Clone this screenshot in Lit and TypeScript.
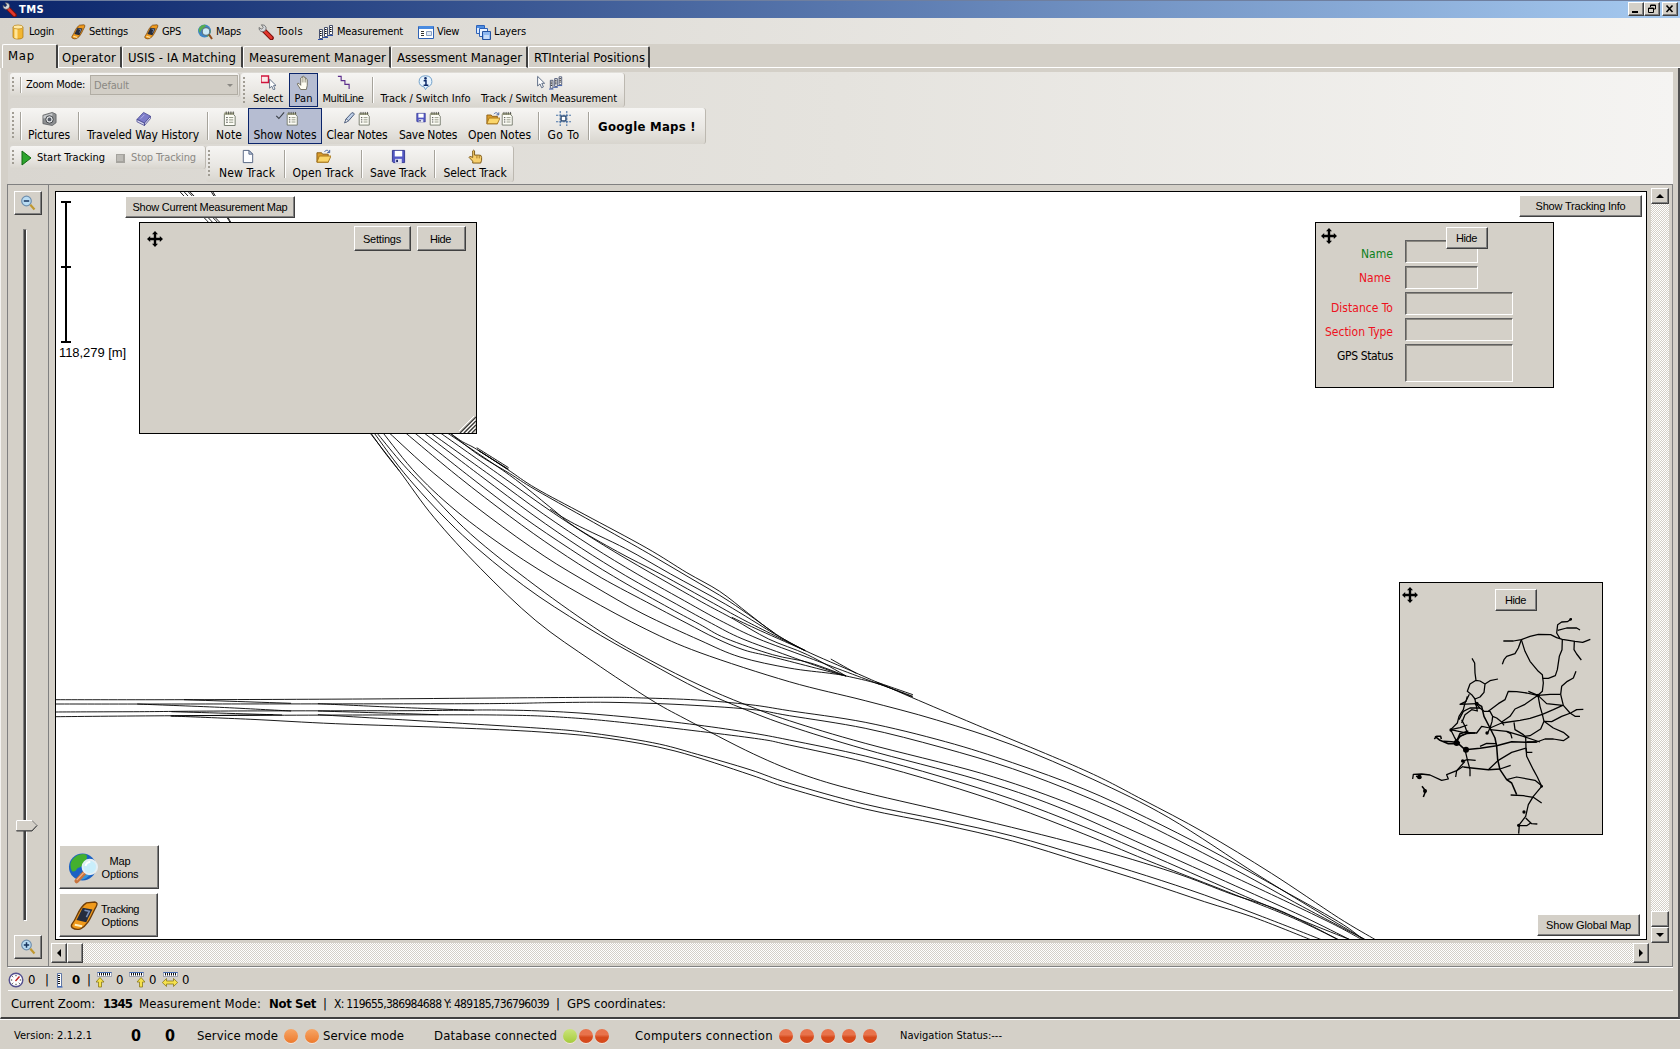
import { LitElement, html, svg, css, type TemplateResult } from "lit";
import { customElement } from "lit/decorators.js";

type Pt = [number, number];

/* ---------- icons ---------- */

const noteShape = svg`<path d="M2.500 3h9l2.500 2.500V15.500H2.500z" fill="#fdfdf6" stroke="#6f7566"/><path d="M2.500 1.500h10.500v2.500H2.500z" fill="#a5a888"/><path d="M4.500 .5v3M7 .5v3M9.500 .5v3M12 .5v3" stroke="#444" stroke-width=".9"/><path d="M4.500 7h1.600M4.500 9.500h1.600M4.500 12h1.600" stroke="#333"/><path d="M7.500 7H12M7.500 9.500H12M7.500 12H12" stroke="#8a8f7c"/>`;
const rulerShape = svg`<path d="M1.500 5.500h3v9h-3zM6.500 3.500h3v9h-3zM11.500 1.500h3v9h-3z" fill="#fff" stroke="#46506e"/><path d="M2 7.500h1.600M2 9.500h1.600M2 11.500h1.600M7 5.500h1.600M7 7.500h1.600M7 9.500h1.600M12 3.500h1.600M12 5.500h1.600M12 7.500h1.600" stroke="#111"/><path d="M0 15.500h5M5 13.500h5M10 11.500h5" stroke="#2b4fa8"/>`;
const cursorShape = svg`<path d="M3 1v11l2.700-2.400L7.600 14l2-.9-1.800-4.200H11z" fill="#fff" stroke="#4b5d78"/>`;
const floppyShape = svg`<path d="M1.500 1.500h13v13h-12l-1-1z" fill="#5358c4" stroke="#34378f"/><path d="M4 2h8v6H4z" fill="#fff"/><path d="M4.500 10.500h7V15h-7z" fill="#e3e4f2"/><path d="M5.500 11.500h2V14h-2z" fill="#222a66"/>`;
const folderShape = svg`<path d="M1 4h5l1 1.500h6V14H1z" fill="#d99b2b" stroke="#8a5c12"/><path d="M1 14l2.500-6.500H16L13 14z" fill="#fbd66a" stroke="#a8761c"/><path d="M9 3c2-2.400 4-2 5 .4M14.600 1v2.800H12" fill="none" stroke="#3b5a9c"/>`;
const gpsShape = svg`<path d="M9.500 1.200L14 .8q1.600.4.6 2.200C12.200 7 11 12.400 6.500 14.600q-2.400.8-4.400-.6-.8-1 .2-2.200C5 8.500 5.200 3.800 9.500 1.200z" fill="#f09a1c" stroke="#6f3d08" stroke-width=".7"/><path d="M7.600 3.800l5 .8-3.200 6.600-5-1.200z" fill="#252c3e"/><path d="M8.500 5l2.500.6-1.500 3" stroke="#7b90b8" fill="none" stroke-width=".8"/><path d="M3.500 12.500l3.800.8" stroke="#fff2c2"/>`;
const wrenchShape = svg`<path d="M6 6.500L13.500 14" stroke="#7d0f0c" stroke-width="4.600" stroke-linecap="round"/><path d="M7 7.500l6.200 6.200" stroke="#e2372c" stroke-width="2.800" stroke-linecap="round"/><path d="M1 3.500L3.600 5.200 5.200 3.400 3.400.8Q7 .4 8 3.200q.5 2-1 3.700-2 1.400-4 .6Q.8 6.400 1 3.500z" fill="#d5d8dc" stroke="#555" stroke-width=".7"/>`;

const ICONS: Record<string, TemplateResult> = {
  wrench: wrenchShape,
  cylinder: svg`<path d="M3 3v10c0 2.700 10 2.700 10 0V3z" fill="#f2b632" stroke="#a8720c" stroke-width=".7"/><path d="M4.500 4v10q1.500.8 3 .7V4z" fill="#ffe59a"/><ellipse cx="8" cy="3" rx="5" ry="2" fill="#ffe9a6" stroke="#b98316" stroke-width=".7"/>`,
  gps: gpsShape,
  globe: svg`<circle cx="7.500" cy="7" r="6.500" fill="#3f86c8"/><path d="M2 4q3-4 7-3-1 3-3 3.500T3 9Q1 7 2 4zM9 9q3-1 4.500-3 .5 4-3 7z" fill="#59ae4c"/><circle cx="9" cy="7.500" r="3.800" fill="#cdeaf6" stroke="#5e7380" stroke-width="1.200"/><path d="M12 10.500l3 4.500" stroke="#8e4a1c" stroke-width="2"/>`,
  rulers: rulerShape,
  view: svg`<path d="M.5 2.500h15v12H.5z" fill="#fff" stroke="#2f62b5"/><path d="M1 2h14v3H1z" fill="#4a8be0"/><path d="M3 7.500h3M3 9.500h3M3 11.500h3" stroke="#333"/><path d="M8.500 7.500h5v4h-5z" fill="#dfe9f7" stroke="#8ca0c0"/>`,
  layers: svg`<path d="M1.500 1.500h8v8h-8z" fill="#dcebff" stroke="#2e62b8"/><path d="M2 2h7v2H2z" fill="#4d8de2"/><path d="M4.500 4.500h8v8h-8z" fill="#eaf3ff" stroke="#2e62b8"/><path d="M7.500 7.500h8v8h-8z" fill="#8fb9f1" stroke="#24529f"/><path d="M9 12h5M9 14h5" stroke="#fff"/>`,
  select: svg`<path d="M0 1h8v7H0z" fill="#fbeaea" stroke="#d0143c" stroke-width="1.500"/><g transform="translate(6.500 3.500) scale(.88)">${cursorShape}</g>`,
  hand: svg`<path d="M5 15.500L1.300 9.500q.4-1.400 2-.4L5 11V3.200q.8-1.400 1.700 0V1.800q.9-1.400 1.800 0v1q.9-1.200 1.800.1V4.500q1-1 1.700.3v6.200l-1 4.500z" fill="#fffdf2" stroke="#666252" stroke-width=".9"/><path d="M6.700 3.500V8M8.500 3v5M10.300 4v4" stroke="#8c8876" stroke-width=".8"/>`,
  multiline: svg`<path d="M2 1.500h3.500v4.500h4v4h4.500V15" fill="none" stroke="#5c2d8c" stroke-width="1.200"/>`,
  info: svg`<path d="M8 .8q6.800.2 6.800 6.200 0 4.500-4.800 5.700L8 15.600l-1.500-2.900Q1.200 11.500 1.200 7 1.200 1 8 .8z" fill="#e7f3fd" stroke="#6a9cc8"/><circle cx="8" cy="3.600" r="1.400" fill="#0d2a6a"/><path d="M6 6.200h2.500V11M6 11h5" fill="none" stroke="#0d2a6a" stroke-width="1.600"/>`,
  cursor: cursorShape,
  camera: svg`<path d="M1 4.500l10-3 4 2v9l-4 3-10-2z" fill="#8e9092" stroke="#55585b" stroke-width=".8"/><path d="M1.500 5l9.500-2.500V6l-9.500 2z" fill="#c9cbcd"/><circle cx="8" cy="9" r="4" fill="#dfe1e3" stroke="#3d4043"/><circle cx="8" cy="9" r="2" fill="#555b66"/>`,
  book: svg`<path d="M1 9l7-7.500 7.500 4L9 13z" fill="#7d7cc9" stroke="#42418c" stroke-width=".8"/><path d="M1 9v2.500l8 4V13zM9 13l6.500-7.500V8L9 15.500z" fill="#d9d9f0" stroke="#42418c" stroke-width=".8"/><path d="M5 8l4-4" stroke="#b5b4e8"/>`,
  note: noteShape,
  check: svg`<path d="M6 5l3 3 6-7" fill="none" stroke="#3b4048" stroke-width="1.300"/>`,
  pencil: svg`<path d="M2 13l1.500-4.500L10 1.500q2-.8 3 1.500L6.500 10.500z" fill="#bfd0e8" stroke="#394a6b"/><path d="M2 13l4.500-2.500L3.500 8.500z" fill="#f6f6f6" stroke="#394a6b" stroke-width=".7"/>`,
  floppy: floppyShape,
  floppySmall: svg`<g transform="translate(2 1) scale(.75)">${floppyShape}</g>`,
  folder: folderShape,
  goto: svg`<path d="M4.500 0v16M11.500 0v16M0 4.500h16M0 11.500h16" stroke="#4a74a8" stroke-width="1.200" stroke-dasharray="2.500 1"/><path d="M5.500 5.500h5v5h-5z" fill="#fff" stroke="#27456e" stroke-width="1.300"/>`,
  play: svg`<path d="M4 1l9 7-9 7z" fill="#2da52d" stroke="#136913"/>`,
  stop: svg`<path d="M4 4h9v9H4z" fill="#a5a39e"/><path d="M5 5h6v6H5z" fill="#bdbbb6"/>`,
  page: svg`<path d="M3.500 1.500h6l4 4v9h-10z" fill="#fcfdff" stroke="#51617f"/><path d="M9.500 1.500v4h4z" fill="#c3d1ea" stroke="#51617f"/>`,
  pointer: svg`<path d="M5 15v-2L1.200 9q.2-1.400 2-.8L5 9V2q1-1.500 2 0v4.500h4.500Q14.500 6 14.500 9v3l-1 3z" fill="#f7cf6d" stroke="#7b5512"/><path d="M9.500 7v3M12 7v3" stroke="#a27622"/>`,
  zoomOut: svg`<circle cx="6.500" cy="6" r="4.800" fill="#b9dcf3" stroke="#6f8fae" stroke-width="1.200"/><path d="M3.800 6h5.400" stroke="#17345e" stroke-width="1.500"/><path d="M10.300 9.800l4.200 4.700" stroke="#c0982f" stroke-width="2.200"/>`,
  zoomIn: svg`<circle cx="6.500" cy="6" r="4.800" fill="#b9dcf3" stroke="#6f8fae" stroke-width="1.200"/><path d="M3.800 6h5.400M6.500 3.300v5.400" stroke="#17345e" stroke-width="1.500"/><path d="M10.300 9.800l4.200 4.700" stroke="#c0982f" stroke-width="2.200"/>`,
  move: svg`<path d="M8 0l3 3.200H9.200v3.600h3.600V5L16 8l-3.200 3V9.200H9.200v3.600H11L8 16l-3-3.200h1.800V9.200H3.200V11L0 8l3.200-3v1.800h3.600V3.200H5z" fill="#000"/>`,
  clock: svg`<circle cx="8" cy="8" r="6.800" fill="#fff" stroke="#54508f" stroke-width="1.400"/><path d="M8 2.800v1.400M8 11.800v1.400M2.800 8h1.400M11.800 8h1.400M4.300 4.300l.9.900M11.700 11.700l-.9-.9M4.300 11.700l.9-.9" stroke="#333"/><path d="M7.500 9l4-4.500" stroke="#c02020" stroke-width="1.400"/>`,
  rulerOne: svg`<path d="M5.500 1.500h4v13h-4z" fill="#fff" stroke="#3d5a96" stroke-width=".8"/><path d="M6 3.500h2M6 5.500h2M6 7.500h2M6 9.500h2M6 11.500h2" stroke="#111"/><path d="M5 15h5.500" stroke="#2456b8"/>`,
  rulerLeft: svg`<path d="M1.500 0h14v4.500h-14z" fill="#fff" stroke="#6b7694" stroke-width=".6"/><path d="M1.500.5h14" stroke="#4169b0"/><path d="M3.500 1v2.500M5.500 1v2.500M7.500 1v2.500M9.500 1v2.500M11.500 1v2.500M13.500 1v2.500" stroke="#111"/><path d="M4 5.500L8 10H5.500v5h-3v-5H0z" fill="#f5e14c" stroke="#8a7a1c" stroke-width=".8"/>`,
  rulerRight: svg`<path d="M.5 0h14v4.500H.5z" fill="#fff" stroke="#6b7694" stroke-width=".6"/><path d="M.5.5h14" stroke="#4169b0"/><path d="M2.500 1v2.500M4.500 1v2.500M6.500 1v2.500M8.500 1v2.500M10.500 1v2.500M12.500 1v2.500" stroke="#111"/><path d="M12 5.500l4 4.500h-2.500v5h-3v-5H8z" fill="#f5e14c" stroke="#8a7a1c" stroke-width=".8"/>`,
  rulerBoth: svg`<path d="M1.500 0h14v4.500h-14z" fill="#fff" stroke="#6b7694" stroke-width=".6"/><path d="M1.500.5h14" stroke="#4169b0"/><path d="M3.500 1v2.500M5.500 1v2.500M7.500 1v2.500M9.500 1v2.500M11.500 1v2.500M13.500 1v2.500" stroke="#111"/><path d="M.3 10.500L4.500 6.500V9h7V6.500l4.200 4-4.200 4V12h-7v2.500z" fill="#f5e14c" stroke="#8a7a1c" stroke-width=".8"/>`,
};

const icon = (name: string, cls = "") =>
  html`<svg class="icon ${cls}" viewBox="0 0 16 16">${ICONS[name]}</svg>`;

/* A caption set to a given pixel width; letter spacing is worked out after rendering. */
const cap = (text: string, width: number, cls = "") =>
  html`<span class="cap ${cls}" data-w=${width}>${text}</span>`;

/* ---------- track geometry ---------- */

const SHEETS: Record<string, { ox: number; oy: number; sx: number; sy: number }> = {
  n: { ox: 340, oy: 420, sx: 2.45, sy: 3 },
  s: { ox: 700, oy: 640, sx: 2.24, sy: 3 },
  w: { ox: 50, oy: 670, sx: 2.24, sy: 3 },
};

const TRACKS: string[] = [
  "n 73,38 145,152 230,292 345,446 480,602 620,725 760,838 848,898 s 120,342 240,408 370,458 600,530 860,617 1060,697 1190,762 1300,812 1430,899",
  "n 83,38 170,178 300,345 450,497 600,618 750,723 882,810 s 100,208 200,258 370,328 620,418 800,500 1000,618 1200,738 1350,829 1456,899",
  "n 90,38 145,120 200,192 320,342 480,498 640,636 760,721 882,796 s 100,193 200,242 370,310 630,400 820,487 1000,590 1200,713 1400,840 1483,899",
  "n 75,38 110,98 145,152",
  "n 105,38 190,165 300,288 450,420 600,530 750,628 882,698 s 200,125 370,182 530,240 700,315 880,418 1050,533 1250,705 1400,828 1490,899",
  "n 120,38 230,160 365,290 500,408 620,497 740,580 882,661 980,711 1100,744 1200,760 1240,768 1320,792 1403,831",
  "n 160,38 290,170 415,288 530,388 640,473 765,555 850,610 921,655 990,690 1060,711 1240,768",
  "n 182,38 318,170 445,288 565,388 670,469 795,556 880,612 945,655 1060,704 1150,728 1240,768",
  "n 205,38 345,168 473,285 592,385 700,467 825,553 910,610 985,656 1100,708 1230,765",
  "n 222,38 368,166 498,282 618,380 728,462 858,552 940,607 1024,656 1150,714 1320,792",
  "n 245,38 395,168 523,279 645,375 757,456 885,545 965,598 1050,657 1145,704 1240,768",
  "n 262,38 415,165 515,262 575,320 680,395 785,462 915,550 1000,607 1140,692",
  "n 515,268 575,312 700,386 810,462 945,553 1065,642 1140,692",
  "n 268,38 340,105 415,160 480,210 640,320 755,400 855,472 955,545 1065,640",
  "n 268,38 300,65 335,88 410,148 480,205 600,284 750,383 850,458 930,514 1000,580 1065,640 1140,692 1270,762 1400,832 s 620,255 860,390 990,478 1130,578 1280,700 1430,833 1513,899",
  "n 960,592 1030,632 1140,692",
  "n 335,83 413,143",
  "n 337,90 410,147",
  "n 340,92 413,148",
  "s 293,57 350,100",
  "s 395,126 477,164",
  "s 397,130 477,169",
  "w 13,89 300,89 700,87 1000,84 1250,82 1330,84 1450,90 1568,104 s 200,212 370,247 550,305 700,368 860,447 1000,533 1140,628 1280,732 1430,845 1486,899",
  "w 13,102 300,102 950,101 1120,98 1250,97 1400,103 1568,118 s 200,227 370,265 540,322 700,386 860,468 1000,553 1200,690 1350,800 1490,899",
  "w 13,126 200,125 400,123 800,122 1000,120 1150,126 1300,142 1450,165 1568,188 s 200,300 370,348 540,410 700,478 860,560 1000,640 1200,757 1350,842 1456,899",
  "w 13,140 300,137 700,135 1000,135 1150,142 1300,160 1568,203 s 200,315 370,366 540,430 700,500 860,582 1000,660 1200,765 1330,835 1430,899",
  "w 600,134 860,155 1100,175 1200,187 1350,218 1450,253 1568,299 s 200,430 370,493 540,540 700,588 860,650 1000,707 1130,765 1260,830 1392,899",
  "w 272,138 450,148 640,161 900,173 1100,186 1250,205 1400,243 1568,314 s 200,445 370,507 540,553 700,603 860,668 1000,727 1130,785 1240,832 1368,899",
  "w 300,89 540,100",
  "w 195,102 380,112 540,123",
  "w 272,125 520,135",
  "w 270,138 500,134",
  "w 600,101 760,111 950,121",
  "w 600,123 870,134",
  "n -396,-690 -320,-590",
  "n -386,-690 -310,-590",
  "n -376,-690 -298,-590",
  "n -372,-690 -292,-590",
  "n -318,-690 -268,-590",
  "n -314,-690 -266,-590",
];

const toPoints = (spec: string): Pt[] => {
  let sheet = SHEETS.n;
  const out: Pt[] = [];
  for (const token of spec.split(" ")) {
    if (SHEETS[token]) {
      sheet = SHEETS[token];
      continue;
    }
    const [x, y] = token.split(",").map(Number);
    out.push([sheet.ox + x / sheet.sx, sheet.oy + y / sheet.sy]);
  }
  return out;
};

/* Catmull-Rom spline through the surveyed points. */
const spline = (p: Pt[]): string => {
  let d = `M${p[0][0].toFixed(1)} ${p[0][1].toFixed(1)}`;
  for (let i = 0; i < p.length - 1; i++) {
    const a = p[i - 1] ?? p[i];
    const b = p[i];
    const c = p[i + 1];
    const e = p[i + 2] ?? c;
    const n = [
      b[0] + (c[0] - a[0]) / 6, b[1] + (c[1] - a[1]) / 6,
      c[0] - (e[0] - b[0]) / 6, c[1] - (e[1] - b[1]) / 6,
      c[0], c[1],
    ].map((v) => v.toFixed(1));
    d += `C${n.join(" ")}`;
  }
  return d;
};

const NETWORK: string[] = [
  "370,214 400,214 424,210 450,200 475,194 512,195 530,204 547,209 585,215 608,218 631,209",
  "424,210 415,235 405,252 380,260 372,270 367,284",
  "424,210 435,245 450,275 475,305 487,315 490,340 487,365 474,377",
  "547,209 546,240 538,260 532,300 526,318 505,326 488,326",
  "540,207 530,190 533,165 545,157 562,156 575,147",
  "533,182 560,175 590,175 600,181",
  "583,215 582,240 590,253 604,271",
  "276,266 284,280 285,310 288,332 270,343 262,365 275,375 285,388 300,382 312,368 315,343 300,334 288,332",
  "315,343 330,333 354,328",
  "268,374 255,400 250,420 237,440 232,460 212,480 222,500 230,515",
  "262,380 258,395 240,404 290,402",
  "285,388 287,402 300,415 312,425 330,425 338,440 350,445 365,457 372,467",
  "338,440 336,456 330,475 322,492",
  "325,425 355,402 375,390 385,365 410,366 440,370 472,377",
  "365,457 390,440 405,418 435,404 474,377",
  "445,365 474,377 510,374 542,374",
  "542,374 545,350 562,335 580,325 588,305",
  "542,374 550,407 570,430 585,440 600,440",
  "474,377 500,402 548,407 520,420 487,434 450,446 420,452 365,460 330,475",
  "474,377 480,410 487,434 492,455 482,478 450,498 430,500",
  "492,455 515,456 545,440 572,430 590,420 610,419",
  "492,455 520,475 550,488 567,502 550,513 520,508 495,508 470,517 440,517",
  "402,458 405,480 430,495 437,502 438,535",
  "330,480 380,485 430,500 480,517",
  "380,485 392,492 396,506",
  "212,480 250,488 290,490 305,470 330,475",
  "212,480 240,474 262,466",
  "245,450 255,470 262,490",
  "237,450 250,425 270,415 300,415",
  "245,460 255,435 275,420 292,424 288,404",
  "230,515 240,500 260,492 285,490",
  "222,518 245,497 262,490",
  "300,530 320,521 350,522",
  "255,540 262,570 270,600 270,620",
  "245,575 262,570 287,572",
  "227,622 230,603 250,590",
  "255,575 230,603 200,615 205,628 185,632 150,616 125,613 100,614 98,628",
  "325,600 355,572 395,548 438,535",
  "360,598 392,587",
  "438,535 440,548 457,548",
  "438,535 440,560 460,600 472,622 485,650 460,680 445,705 437,740 418,765 416,792",
  "380,630 410,622 465,632 485,648",
  "392,676 430,678 460,683 485,700",
  "437,745 455,762 472,763",
  "418,768 440,768 452,760",
];
const TRUNKS: string[] = [
  "287,400 305,410 312,440 330,475 345,505 350,530 353,570 360,600 380,630 395,640 410,675",
  "165,500 180,512 205,522 235,522 255,540 300,536 350,528 395,516 440,518 470,517",
  "163,508 170,500 182,500 184,508",
  "190,515 215,516 240,520",
  "250,592 275,595 325,600 360,598",
  "126,650 137,664 130,682",
  "108,620 124,624",
  "265,484 240,492 228,520",
];

/* ---------- toolbar data ---------- */

interface Tool {
  kind: "grip" | "sep" | "gap" | "tool";
  w: number;
  text?: string;
  tw?: number;
  icons?: string[];
  on?: boolean;
}
const grip: Tool = { kind: "grip", w: 8 };
const sep = (w: number): Tool => ({ kind: "sep", w });
const gap = (w: number): Tool => ({ kind: "gap", w });
const tool = (w: number, text: string, tw: number, icons: string[], on = false): Tool => ({
  kind: "tool", w, text, tw, icons, on,
});

const MODES: Tool[] = [
  grip, tool(38, "Select", 30, ["select"]), gap(2), tool(29, "Pan", 18, ["hand"], true),
  tool(50, "MultiLine", 41, ["multiline"]), sep(10),
  tool(95, "Track / Switch Info", 90, ["info"]), gap(1),
  tool(150, "Track / Switch Measurement", 136, ["cursor", "rulers"]),
];
const NOTES: Tool[] = [
  grip, sep(5), tool(52, "Pictures", 42, ["camera"]), sep(8),
  tool(120, "Traveled Way History", 112, ["book"]), sep(10), tool(32, "Note", 26, ["note"]), gap(3),
  tool(74, "Show Notes", 63, ["check", "note"], true), tool(70, "Clear Notes", 61, ["pencil", "note"]),
  tool(72, "Save Notes", 58, ["floppySmall", "note"]), tool(71, "Open Notes", 63, ["folder", "note"]),
  sep(8), tool(41, "Go To", 32, ["goto"]), sep(10),
];
const TRACK_FILES: Tool[] = [
  grip, tool(66, "New Track", 56, ["page"]), sep(10), tool(66, "Open Track", 61, ["folder"]), sep(12),
  tool(60, "Save Track", 56, ["floppy"]), sep(13), tool(68, "Select Track", 63, ["pointer"]),
];

const MENU: [string, string, number, number][] = [
  ["cylinder", "Login", 25, 60], ["gps", "Settings", 39, 73], ["gps", "GPS", 19, 54],
  ["globe", "Maps", 25, 61], ["wrench", "Tools", 26, 60], ["rulers", "Measurement", 66, 100],
  ["view", "View", 22, 57], ["layers", "Layers", 32, 60],
];

const TABS: [string, number, number][] = [
  ["Operator", 54, 64], ["USIS - IA Matching", 108, 121], ["Measurement Manager", 137, 148],
  ["Assessment Manager", 125, 137], ["RTInterial Positions", 111, 122],
];

const NODES: [number, number, number][] = [
  [258, 540, 9], [230, 520, 9], [118, 622, 7], [248, 574, 5], [290, 402, 6], [213, 481, 5], [432, 727, 5],
  [474, 377, 5], [135, 664, 6], [416, 767, 5], [485, 650, 4], [572, 149, 4], [321, 490, 5],
];

@customElement("app-root")
export class AppRoot extends LitElement {
  static styles = css`
    :host { display: block; width: 1680px; height: 1050px; overflow: hidden; background: #d4d0c8; color: #000;
      font: 11px/14px "DejaVu Sans Condensed", "DejaVu Sans", "Open Sans", sans-serif; }
    * { box-sizing: border-box; }
    .window { display: flex; flex-direction: column; height: 1050px; border-bottom: 1px solid #fff; }
    .icon { width: 16px; height: 16px; flex: none; display: block; }
    .cap { display: inline-block; white-space: nowrap; flex: none; }
    .b { font-weight: bold; }
    .t12 { font-size: 12px; }
    .dim { color: #8b8984; }

    .title { height: 18px; flex: none; display: flex; align-items: center; padding: 0 2px 0 2px; gap: 2px;
      background: linear-gradient(90deg, #0a246a, #a6caf0); border-top: 1px solid #6f7f9f; color: #fff; }
    .title .icon { width: 15px; height: 15px; }
    .spring { flex: 1; }
    .caption-btn { width: 16px; height: 14px; display: flex; align-items: center; justify-content: center; background: #d4d0c8;
      border: 1px solid; border-color: #fff #404040 #404040 #fff; box-shadow: inset -1px -1px #808080; margin-bottom: 1px; }
    .caption-btn.min { margin-right: -2px; }
    .caption-btn svg { width: 10px; height: 10px; }

    .menu { height: 26px; flex: none; display: flex; align-items: center; padding: 2px 0 0 10px;
      background: linear-gradient(90deg, #d6d3cc, #f5f4f2); }
    .menu-item { display: flex; align-items: center; gap: 3px; flex: none; }

    .tabs { height: 24px; flex: none; display: flex; align-items: flex-end; padding-left: 2px; font-size: 13px; }
    .tab { height: 22px; flex: none; padding: 3px 0 0 5px; border-top: 1px solid #fff; border-right: 2px solid #404040;
      border-bottom: 1px solid #fff; border-left: 1px solid #fff; border-radius: 2px 2px 0 0; line-height: 15px; }
    .tab.active { width: 56px; height: 24px; padding-top: 3px; border-bottom: 0; }
    .tab.active + .tab { padding-left: 3px; }
    .tabs-rest { flex: 1; height: 1px; background: #fff; }

    .page { flex: 1; min-height: 0; display: flex; flex-direction: column; padding: 4px 5px 0 7px;
      border-right: 2px solid #505050; border-bottom: 2px solid #404040; border-left: 1px solid #f4f3f0; }
    .bars { height: 112px; flex: none; display: flex; flex-direction: column; padding: 1px 0 0 2px;
      background: linear-gradient(90deg, #d9d6d0, #e5e3de 50%, #f5f4f2); }
    .bar-row { display: flex; align-items: flex-start; margin-bottom: 1px; }
    .bar-row.notes { margin-bottom: 2px; }
    .strip { display: flex; align-items: stretch; border-radius: 3px; border-right: 1px solid #bcb8b0;
      background: linear-gradient(#f6f5f3, #e9e7e3 55%, #d8d5ce); }
    .h1 { height: 34px; } .h2 { height: 36px; } .h3 { height: 36px; }
    .zoom-strip { width: 230px; height: 24px; margin-right: 1px; align-items: center; }
    .run-strip { width: 196px; height: 23px; align-items: center; }
    .grip, .sep { flex: none; align-self: stretch; display: flex; }
    .grip { padding: 4px 0 4px 2px; }
    .grip::before { content: ""; width: 2px; background: repeating-linear-gradient(#a19d94 0 2px, transparent 2px 4px); }
    .sep { justify-content: center; padding: 4px 0; }
    .sep::before { content: ""; width: 2px; background: linear-gradient(90deg, #a6a39b 50%, #fff 50%); }
    .tool { flex: none; display: flex; flex-direction: column; align-items: center; padding-top: 2px; border: 1px solid transparent; }
    .tool .pics { display: flex; height: 16px; }
    .tool .pics .icon { width: 14px; height: 15px; }
    .tool .pics .icon:only-child { width: 15px; }
    .tool.on { background: #b6bdd2; border-color: #0a246a; }
    .h1 .tool { padding-top: 1px; }
    .h1 .tool .cap { margin-top: 2px; line-height: 12px; }
    .h2 .tool .cap, .h3 .tool .cap { font-size: 12px; line-height: 15px; margin-top: 1px; }
    .google { width: 111px; display: flex; align-items: center; padding: 2px 0 0 4px; font-size: 13px; }
    .zoom-label { width: 67px; padding-left: 3px; }
    .combo { width: 148px; height: 20px; border: 1px solid #b1ada4; background: #d2cec6; display: flex; align-items: center;
      justify-content: space-between; padding: 1px 4px 0 3px; color: #8b8984; }
    .combo i { border: 3px solid transparent; border-top-color: #8b8984; border-bottom: 0; }
    .run { display: flex; align-items: center; gap: 3px; flex: none; width: 94px; padding-top: 1px; }

    .work { height: 783px; flex: none; display: flex; border: 1px solid #808080; margin-left: -1px; }
    .zoomer { width: 41px; flex: none; display: flex; flex-direction: column; align-items: center; padding: 6px 1px 7px 0;
      border-right: 1px solid #808080; }
    .btn { display: flex; align-items: center; justify-content: center; background: #d4d0c8; text-align: center; flex: none;
      border: 1px solid; border-color: #fff #404040 #404040 #fff; box-shadow: inset -1px -1px #808080;
      font: 11px/13px "Liberation Sans", Arial, sans-serif; padding-top: 1px; }
    .zoomer .btn { width: 28px; height: 24px; margin-left: 1px; padding: 0; }
    .slider { flex: 1; width: 22px; margin: 14px 4px 14px 0; display: flex; flex-direction: column; align-items: center; position: relative; }
    .groove { width: 4px; flex: 1; margin-right: 2px; background: #404040; border: 1px solid; border-color: #808080 #fff #fff #808080; }
    .thumb { position: absolute; left: 1px; top: 590px; width: 22px; height: 13px; }

    .canvas-col { display: grid; grid-template-columns: 1599px 19px; grid-template-rows: 755px 20px; padding: 3px 0 0 3px; }
    .map-wrap { padding: 3px; }
    .map { position: relative; width: 1592px; height: 749px; border: 1px solid #000; background: #fff; overflow: hidden; }
    .tracks { display: block; width: 1590px; height: 747px; }
    .vbar, .hbar { display: flex; background: repeating-conic-gradient(#fff 0 25%, #d4d0c8 0 50%) 0 0 / 2px 2px; }
    .vbar { flex-direction: column; width: 18px; justify-content: space-between; }
    .hbar { height: 20px; justify-content: space-between; width: 1598px; margin-left: -1px; }
    .vbar .btn { width: 18px; height: 16px; padding: 0; }
    .hbar .btn { width: 16px; height: 20px; padding: 0; }
    .group { display: flex; flex-direction: inherit; }
    .arrow { width: 8px; height: 8px; }

    .scale-text { position: absolute; left: 3px; top: 153px; font: 13px/16px "Liberation Sans", Arial, sans-serif; }
    .over { position: absolute; }
    .b-measure { left: 69px; top: 4px; width: 170px; height: 22px; }
    .b-tracking { left: 1463px; top: 3px; width: 123px; height: 22px; }
    .b-global { left: 1481px; top: 722px; width: 103px; height: 22px; }
    .b-mapopt { left: 3px; top: 653px; width: 100px; height: 44px; }
    .b-trkopt { left: 3px; top: 701px; width: 99px; height: 44px; }
    .opt { justify-content: flex-start; padding-left: 8px; gap: 2px; }
    .opt .icon { width: 31px; height: 32px; }
    .opt-text { display: flex; flex-direction: column; align-items: center; width: 38px; }
    .panel { position: absolute; background: #d4d0c8; border: 1px solid #000; }
    .p1 { left: 83px; top: 30px; width: 338px; height: 212px; }
    .p2 { left: 1259px; top: 30px; width: 239px; height: 166px; padding: 17px 0 0 9px; }
    .p3 { left: 1343px; top: 390px; width: 204px; height: 253px; }
    .p1 .mv { left: 7px; top: 8px; } .p2 .mv { left: 5px; top: 5px; } .p3 .mv { left: 2px; top: 4px; }
    .p1-set { left: 214px; top: 3px; width: 57px; height: 25px; padding-right: 1px; }
    .p1-hide { left: 277px; top: 3px; width: 49px; height: 25px; padding-right: 2px; }
    .p2-hide { left: 130px; top: 4px; width: 42px; height: 22px; padding-right: 1px; }
    .p3-hide { left: 95px; top: 6px; width: 42px; height: 22px; padding-right: 1px; }
    .grip-corner { position: absolute; right: 0; bottom: 0; width: 17px; height: 17px; }
    .field { display: flex; height: 23px; margin-bottom: 3px; gap: 12px; font-size: 12px; line-height: 15px; }
    .field.tall { height: 38px; }
    .field .lab { width: 68px; text-align: right; padding-top: 7px; }
    .field.second .lab { padding: 5px 2px 0 0; }
    .field.low .lab { padding-top: 9px; }
    .field.tall .lab { padding-top: 5px; }
    .well { width: 73px; border: 1px solid; border-color: #606060 #fff #fff #606060; box-shadow: inset 1px 1px #8a8780; }
    .well.wide { width: 108px; }
    .green { color: #0c8020; } .red { color: #ee1020; }
    .net { display: block; width: 202px; height: 251px; }

    .counts { height: 24px; flex: none; display: flex; align-items: center; border-top: 1px solid #fff; border-bottom: 1px solid #fff;
      padding-top: 1px; font-size: 13px; }
    .cell { flex: none; display: flex; align-items: center; }
    .coords { flex: 1; display: flex; align-items: center; font-size: 13px; padding: 0 0 1px 3px; }

    .status { height: 30px; flex: none; display: flex; align-items: center; padding: 3px 0 0 14px; border-top: 1px solid #fff; font-size: 13px; }
    .small { font-size: 11px; }
    .zero { font-size: 16px; }
    .led { width: 14px; height: 14px; border-radius: 50%; flex: none; box-shadow: 0 1px #f3e4da; }
    .orange { background: linear-gradient(#f6a566, #ee7a2c); }
    .lime { background: linear-gradient(#cbe47c, #a6cc3c); }
    .crimson { background: linear-gradient(#e8734c 40%, #d64a1c 60%); }
  `;

  protected updated(): void {
    this.fitCaptions();
    document.fonts?.ready.then(() => this.fitCaptions());
  }

  private fitCaptions(): void {
    this.renderRoot.querySelectorAll<HTMLElement>(".cap").forEach((el) => {
      el.style.letterSpacing = "0";
      const chars = (el.textContent ?? "").length;
      const extra = Number(el.dataset.w) - el.getBoundingClientRect().width;
      el.style.letterSpacing = `${(extra / chars).toFixed(3)}px`;
    });
  }

  private renderTools(items: Tool[]) {
    return items.map((t) =>
      t.kind === "tool"
        ? html`<div class="tool ${t.on ? "on" : ""}" style="width:${t.w}px">
            <div class="pics">${t.icons!.map((n) => icon(n))}</div>${cap(t.text!, t.tw!)}
          </div>`
        : html`<div class=${t.kind} style="width:${t.w}px"></div>`
    );
  }

  private cell(width: number, content: unknown) {
    return html`<div class="cell" style="width:${width}px">${content}</div>`;
  }

  private arrow(d: string) {
    return html`<svg class="arrow" viewBox="0 0 8 8"><path d=${d} /></svg>`;
  }

  private renderMap() {
    return html`<div class="map">
      <svg class="tracks" viewBox="56 192 1590 747">
        <g fill="none" stroke="#000" stroke-width=".9">
          ${TRACKS.map((t) => svg`<path d=${spline(toPoints(t))} />`)}
        </g>
        <path d="M66 202V342M61 202h10M61 267h10M61 342h10" stroke="#000" stroke-width="2" />
      </svg>
      <div class="scale-text">${cap("118,279 [m]", 67)}</div>
      <div class="btn over b-measure">${cap("Show Current Measurement Map", 155)}</div>
      <div class="btn over b-tracking">${cap("Show Tracking Info", 90)}</div>

      <div class="panel p1">
        ${icon("move", "over mv")}
        <div class="btn over p1-set">${cap("Settings", 38)}</div>
        <div class="btn over p1-hide">${cap("Hide", 21)}</div>
        <svg class="grip-corner" viewBox="0 0 17 17">
          <path d="M0 16L17-1M4 17L17 4M8 17l9-9M12 17l5-5" stroke="#fff" transform="translate(-1 0)" />
          <path d="M1 17L17 1M5 17L17 5M9 17l8-8M13 17l4-4" stroke="#333" stroke-width="1.200" />
        </svg>
      </div>

      <div class="panel p2">
        ${icon("move", "over mv")}
        <div class="field"><div class="lab green">${cap("Name", 32)}</div><div class="well"></div></div>
        <div class="field second"><div class="lab red">${cap("Name", 32)}</div><div class="well"></div></div>
        <div class="field low"><div class="lab red">${cap("Distance To", 62)}</div><div class="well wide"></div></div>
        <div class="field"><div class="lab red">${cap("Section Type", 68)}</div><div class="well wide"></div></div>
        <div class="field tall"><div class="lab">${cap("GPS Status", 56)}</div><div class="well wide"></div></div>
        <div class="btn over p2-hide">${cap("Hide", 21)}</div>
      </div>

      <div class="panel p3">
        <svg class="net" viewBox="60 40 606 753">
          <g fill="none" stroke="#000" stroke-width="3.800" stroke-linejoin="round">
            ${NETWORK.map((p) => svg`<polyline points=${p} />`)}
          </g>
          <g fill="none" stroke="#000" stroke-width="4.600" stroke-linejoin="round">
            ${TRUNKS.map((p) => svg`<polyline points=${p} />`)}
          </g>
          ${NODES.map(([x, y, r]) => svg`<circle cx=${x} cy=${y} r=${r} />`)}
        </svg>
        ${icon("move", "over mv")}
        <div class="btn over p3-hide">${cap("Hide", 21)}</div>
      </div>

      <div class="btn over opt b-mapopt">
        <svg class="icon" viewBox="0 0 32 32">
          <circle cx="15" cy="15" r="14" fill="#1b62c4" /><path d="M4 8Q10 0 19 2q2 5-3 8-1 5-6 6-3 5-6 3-3-6 0-11z" fill="#43b02e" />
          <path d="M12 22q6-3 11 0-3 6-10 6z" fill="#3796dc" /><path d="M17 21L9 29.500" stroke="#c8743e" stroke-width="4.500" stroke-linecap="round" />
          <path d="M16 21l-7 7.500" stroke="#f0b48a" stroke-width="1.300" />
          <circle cx="22.500" cy="15" r="7.500" fill="#c9eefb" stroke="#e6eff4" stroke-width="2" /><path d="M18 14q1-4 5-4.500" stroke="#fff" stroke-width="2" fill="none" />
        </svg>
        <div class="opt-text">${cap("Map", 21)}${cap("Options", 37)}</div>
      </div>
      <div class="btn over opt b-trkopt">
        ${icon("gps")}
        <div class="opt-text">${cap("Tracking", 38)}${cap("Options", 37)}</div>
      </div>
      <div class="btn over b-global">${cap("Show Global Map", 85)}</div>
    </div>`;
  }

  render() {
    return html`<div class="window">
      <div class="title">
        ${icon("wrench")}${cap("TMS", 25, "b")}
        <div class="spring"></div>
        <div class="caption-btn min"><svg viewBox="0 0 10 10"><path d="M1 8h6" stroke="#000" stroke-width="2" /></svg></div>
        <div class="caption-btn"><svg viewBox="0 0 10 10"><path d="M3.500 3V1h5v4h-2M1.500 4h5v4.500h-5zM1 4.500h6M3 1.500h6" fill="none" stroke="#000" /></svg></div>
        <div class="caption-btn"><svg viewBox="0 0 10 10"><path d="M1.500 1.500l6 6.500M7.500 1.500l-6 6.500" stroke="#000" stroke-width="1.600" /></svg></div>
      </div>
      <div class="menu">
        ${MENU.map(([i, text, tw, w]) => html`<div class="menu-item" style="width:${w}px">${icon(i)}${cap(text, tw)}</div>`)}
      </div>
      <div class="tabs">
        <div class="tab active">${cap("Map", 27)}</div>
        ${TABS.map(([text, tw, w]) => html`<div class="tab" style="width:${w}px">${cap(text, tw)}</div>`)}
        <div class="tabs-rest"></div>
      </div>
      <div class="page">
        <div class="bars">
          <div class="bar-row">
            <div class="strip zoom-strip">
              ${this.renderTools([grip, sep(5)])}
              <div class="zoom-label">${cap("Zoom Mode:", 59)}</div>
              <div class="combo">${cap("Default", 35)}<i></i></div>
            </div>
            <div class="strip h1">${this.renderTools(MODES)}</div>
          </div>
          <div class="bar-row notes">
            <div class="strip h2">${this.renderTools(NOTES)}<div class="google">${cap("Google Maps !", 98, "b")}</div></div>
          </div>
          <div class="bar-row">
            <div class="strip run-strip">
              ${this.renderTools([grip, gap(1)])}
              <div class="run">${icon("play")}${cap("Start Tracking", 68)}</div>
              <div class="run dim">${icon("stop")}${cap("Stop Tracking", 65)}</div>
            </div>
            <div class="strip h3">${this.renderTools(TRACK_FILES)}${this.renderTools([gap(4)])}</div>
          </div>
        </div>
        <div class="work">
          <div class="zoomer">
            <div class="btn">${icon("zoomOut")}</div>
            <div class="slider">
              <div class="groove"></div>
              <svg class="thumb" viewBox="0 0 22 13"><path d="M.5 1.500H16l5 5-5 5H.5z" fill="#d4d0c8" stroke="#808080" /><path d="M.5 11V1.500H16" fill="none" stroke="#fff" /><path d="M.5 12H16l5-5.500" fill="none" stroke="#404040" /></svg>
            </div>
            <div class="btn">${icon("zoomIn")}</div>
          </div>
          <div class="canvas-col">
            <div class="map-wrap">${this.renderMap()}</div>
            <div class="vbar">
              <div class="btn">${this.arrow("M4 2l4 4H0z")}</div>
              <div class="group"><div class="btn"></div><div class="btn">${this.arrow("M4 6l4-4H0z")}</div></div>
            </div>
            <div class="hbar">
              <div class="group"><div class="btn">${this.arrow("M2 4l4-4v8z")}</div><div class="btn"></div></div>
              <div class="btn">${this.arrow("M6 4L2 0v8z")}</div>
            </div>
          </div>
        </div>
        <div class="counts">
          ${this.cell(20, icon("clock"))}${this.cell(17, cap("0", 8))}${this.cell(7, "|")}
          ${this.cell(20, icon("rulerOne"))}${this.cell(15, cap("0", 9, "b"))}${this.cell(9, "|")}
          ${this.cell(20, icon("rulerLeft"))}${this.cell(13, cap("0", 8))}
          ${this.cell(20, icon("rulerRight"))}${this.cell(13, cap("0", 8))}
          ${this.cell(20, icon("rulerBoth"))}${this.cell(14, cap("0", 8))}
        </div>
        <div class="coords">
          ${this.cell(92, cap("Current Zoom:", 84))}${this.cell(36, cap("1345", 29, "b"))}
          ${this.cell(130, cap("Measurement Mode:", 122))}${this.cell(54, cap("Not Set", 47, "b"))}${this.cell(11, "|")}
          ${this.cell(222, cap("X: 119655,386984688 Y: 489185,736796039", 215, "t12"))}${this.cell(11, "|")}
          ${cap("GPS coordinates:", 99)}
        </div>
      </div>
      <div class="status">
        ${this.cell(117, cap("Version: 2.1.2.1", 78, "small"))}
        ${this.cell(34, cap("0", 11, "b zero"))}${this.cell(32, cap("0", 11, "b zero"))}
        ${this.cell(87, cap("Service mode", 81))}${this.cell(21, html`<i class="led orange"></i>`)}${this.cell(18, html`<i class="led orange"></i>`)}
        ${this.cell(111, cap("Service mode", 81))}
        ${this.cell(129, cap("Database connected", 123))}${this.cell(16, html`<i class="led lime"></i>`)}${this.cell(16, html`<i class="led crimson"></i>`)}${this.cell(40, html`<i class="led crimson"></i>`)}
        ${this.cell(144, cap("Computers connection", 138))}
        ${[21, 21, 21, 21, 37].map((w) => this.cell(w, html`<i class="led crimson"></i>`))}
        ${cap("Navigation Status:---", 102, "small")}
      </div>
    </div>`;
  }
}
